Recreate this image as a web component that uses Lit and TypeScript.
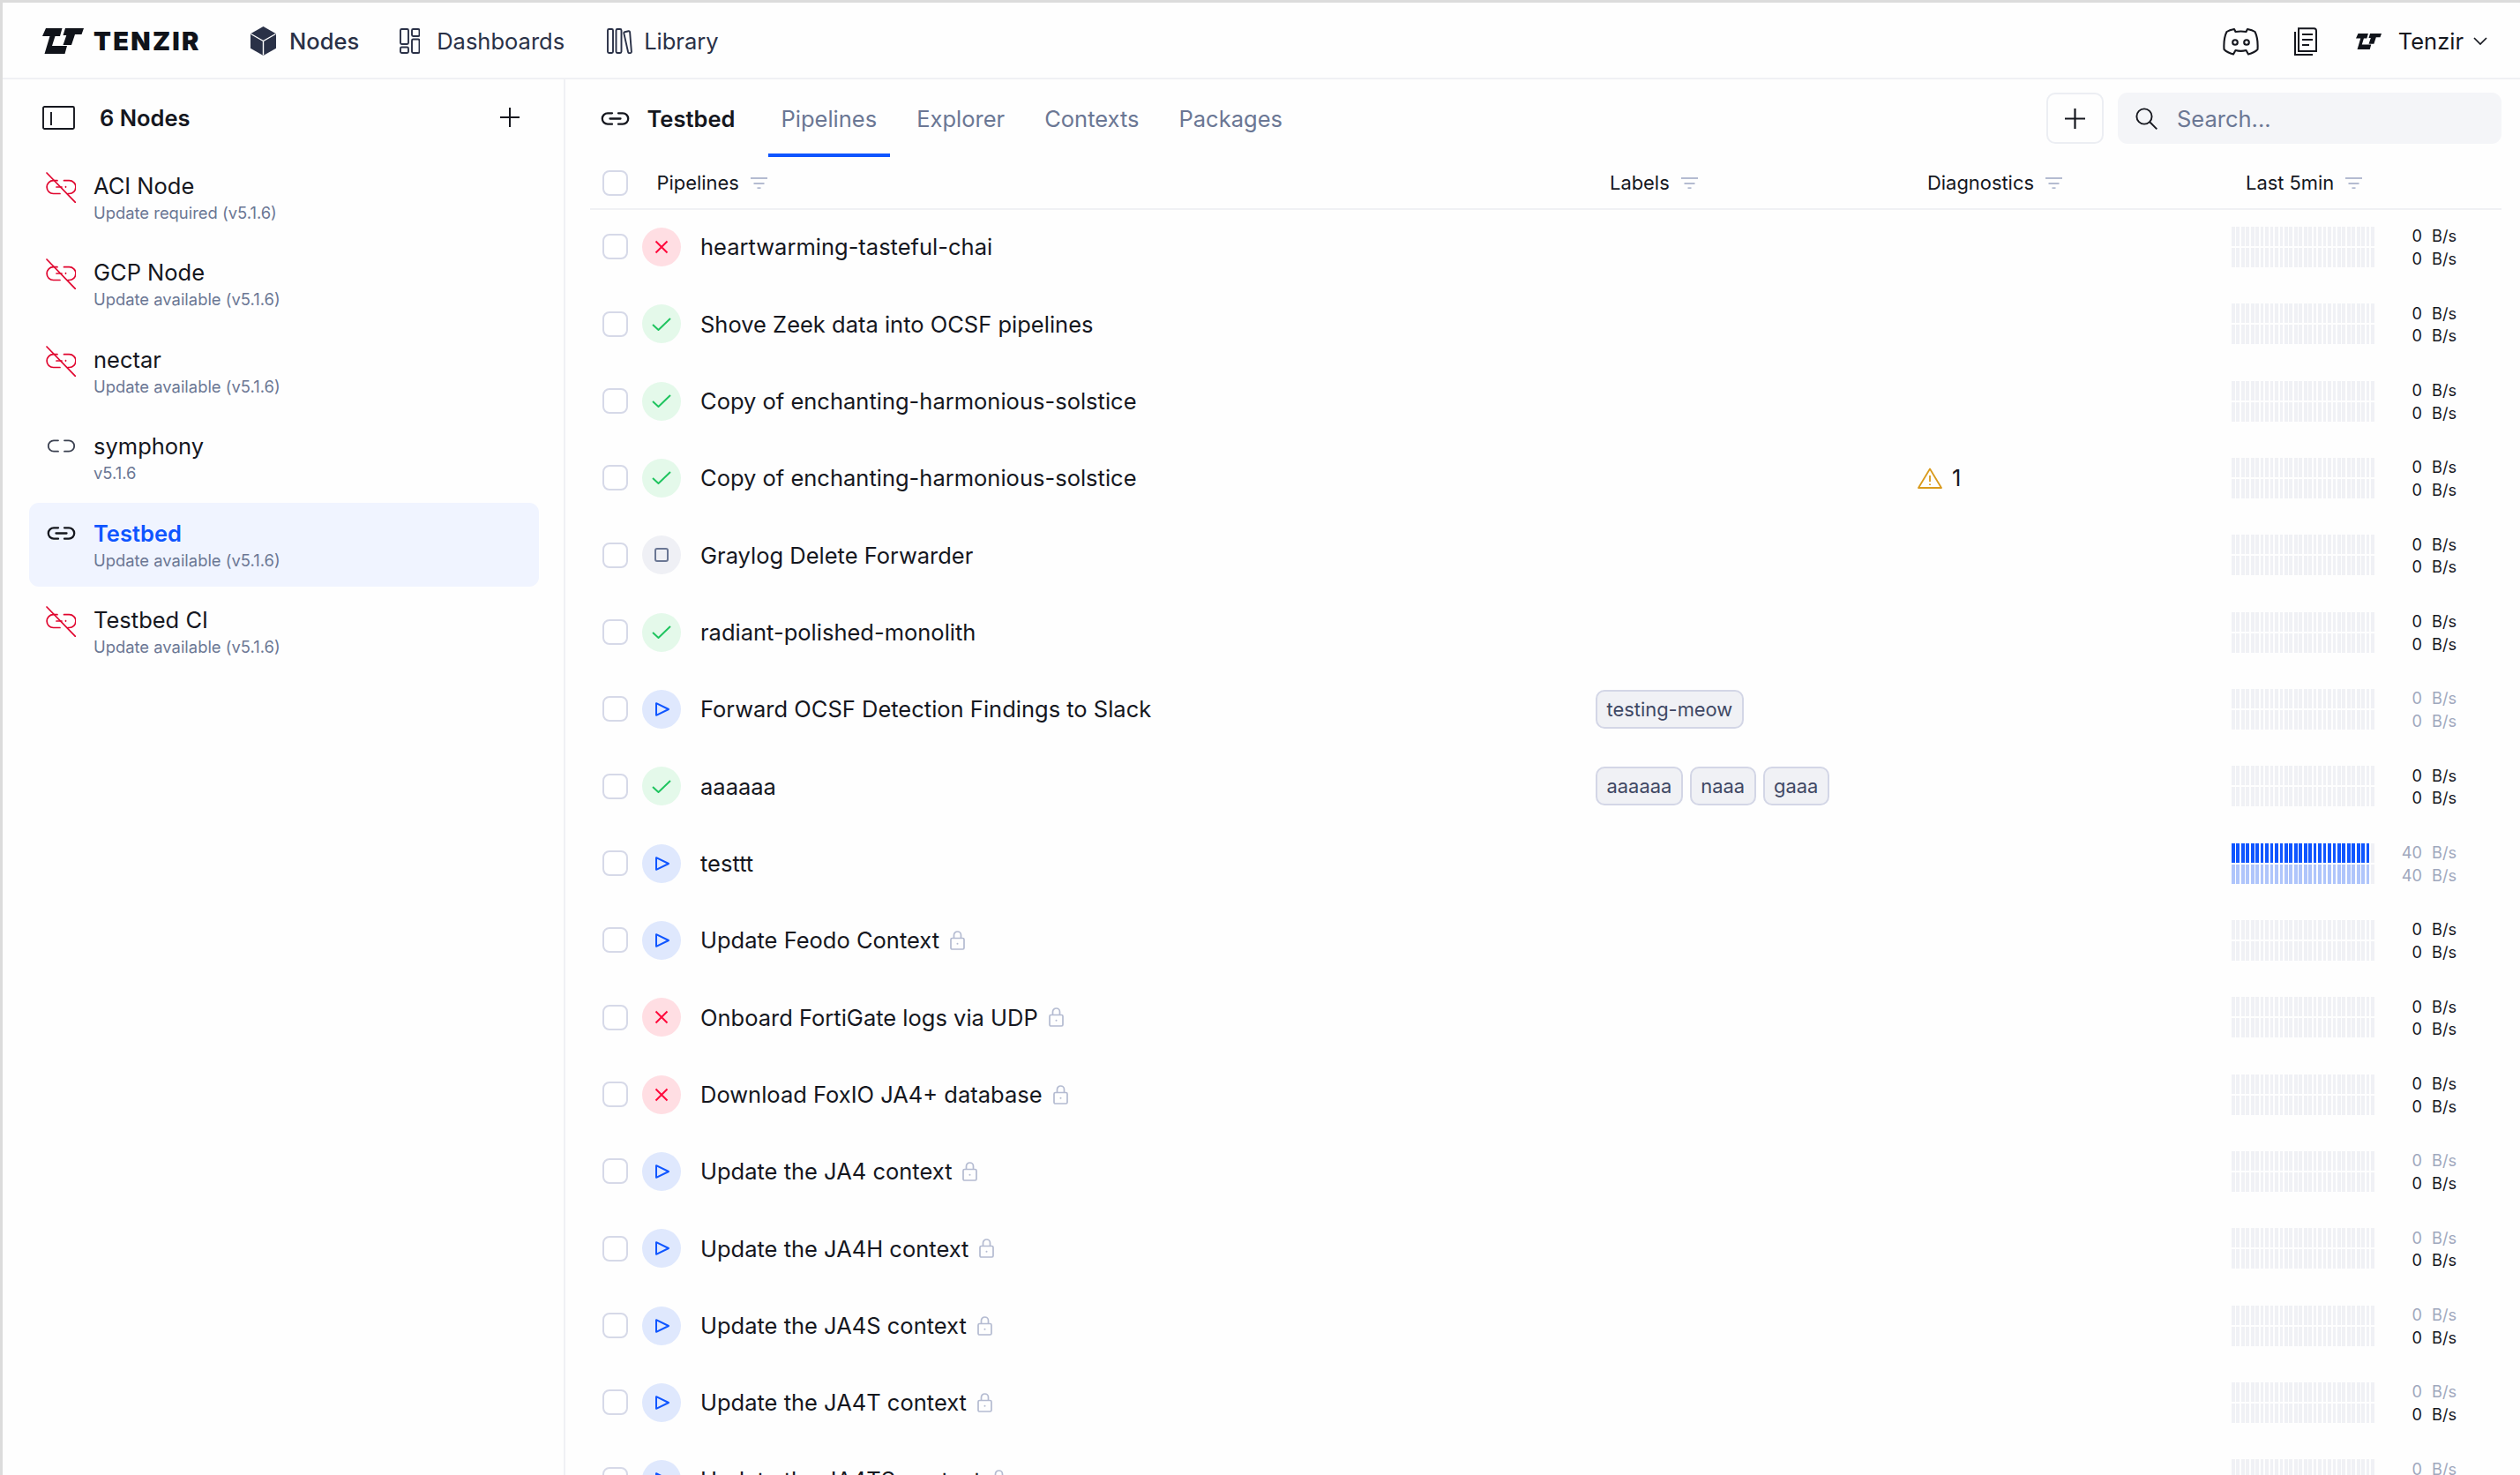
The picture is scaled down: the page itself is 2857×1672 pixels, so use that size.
import { LitElement, html, svg, css, nothing } from "lit";
import { customElement } from "lit/decorators.js";

type Status = "fail" | "ok" | "run" | "stop";
interface Row {
  name: string;
  status: Status;
  labels?: string[];
  warn?: number;
  lock?: boolean;
  rate?: string;
  fade?: [boolean, boolean];
  active?: boolean;
}

const rows: Row[] = [
  { name: "heartwarming-tasteful-chai", status: "fail" },
  { name: "Shove Zeek data into OCSF pipelines", status: "ok" },
  { name: "Copy of enchanting-harmonious-solstice", status: "ok" },
  { name: "Copy of enchanting-harmonious-solstice", status: "ok", warn: 1 },
  { name: "Graylog Delete Forwarder", status: "stop" },
  { name: "radiant-polished-monolith", status: "ok" },
  { name: "Forward OCSF Detection Findings to Slack", status: "run", labels: ["testing-meow"], fade: [true, true] },
  { name: "aaaaaa", status: "ok", labels: ["aaaaaa", "naaa", "gaaa", ""] },
  { name: "testtt", status: "run", rate: "40", fade: [true, true], active: true },
  { name: "Update Feodo Context", status: "run", lock: true },
  { name: "Onboard FortiGate logs via UDP", status: "fail", lock: true },
  { name: "Download FoxIO JA4+ database", status: "fail", lock: true },
  { name: "Update the JA4 context", status: "run", lock: true, fade: [true, false] },
  { name: "Update the JA4H context", status: "run", lock: true, fade: [true, false] },
  { name: "Update the JA4S context", status: "run", lock: true, fade: [true, false] },
  { name: "Update the JA4T context", status: "run", lock: true, fade: [true, false] },
  { name: "Update the JA4TS context", status: "run", lock: true, fade: [true, false] },
];

const nodes = [
  { name: "ACI Node", sub: "Update required (v5.1.6)", state: "down" },
  { name: "GCP Node", sub: "Update available (v5.1.6)", state: "down" },
  { name: "nectar", sub: "Update available (v5.1.6)", state: "down" },
  { name: "symphony", sub: "v5.1.6", state: "idle" },
  { name: "Testbed", sub: "Update available (v5.1.6)", state: "on" },
  { name: "Testbed CI", sub: "Update available (v5.1.6)", state: "down" },
];

const logo = (cls: string) => html`<svg class=${cls} viewBox="0 0 47 29" fill="#10131a">
  <path d="M4 0H22.5L20 9H14.5L11 20H28L25.5 29H2.5L8.5 9H0Z" />
  <path d="M26 0H47L44.5 7H37L33 19H23.5L27.3 8H23.5Z" />
</svg>`;

const linkIcon = (cls: string, mid: boolean) => html`<svg class=${cls} viewBox="0 0 32 15" fill="none" stroke="currentColor" stroke-linecap="round">
  <path d="M12.5 1.3H7.5a6.2 6.2 0 0 0 0 12.4H12.5M19.5 1.3H24.5a6.2 6.2 0 0 1 0 12.4H19.5" />
  ${mid ? svg`<path d="M10 7.5H22" />` : nothing}
</svg>`;

const brokenIcon = html`<svg class="nico broken" viewBox="0 0 34 35" fill="none" stroke="#e0062f" stroke-width="1.7" stroke-linecap="round">
  <path d="M1 1L33.5 34.5" />
  <path d="M13 9.7H8.5a7.4 7.4 0 0 0 0 14.8H16M20.5 9.7H26.5a7.4 7.4 0 0 1 0 14.8H25" />
  <path d="M12 17H18M22.5 16.5v.6" />
</svg>`;

const filterIcon = html`<svg class="filter" viewBox="0 0 19 13" fill="none" stroke="#b4bbd1" stroke-width="1.9">
  <path d="M0 1H19M3.5 7H15.5M7.5 12.2H11.5" />
</svg>`;

const lockIcon = html`<svg class="lock" viewBox="0 0 17 22" fill="none" stroke="#b4bbd1" stroke-width="1.7">
  <rect x="1" y="8.5" width="15" height="12.5" rx="1.6" />
  <path d="M4.5 8.5V5a4 4 0 0 1 8 0v3.5" />
  <circle cx="8.5" cy="14.7" r="1" fill="#b4bbd1" stroke="none" />
</svg>`;

const statusIcon = (s: Status) => {
  if (s === "fail")
    return html`<svg class="si" viewBox="0 0 16 16" fill="none" stroke="#ff0a3c" stroke-width="2"><path d="M1.5 1.5L14.5 14.5M14.5 1.5L1.5 14.5" /></svg>`;
  if (s === "ok")
    return html`<svg class="si check" viewBox="0 0 22 15" fill="none" stroke="#1fc45f" stroke-width="2"><path d="M1 8L7.5 14L21 1" /></svg>`;
  if (s === "run")
    return html`<svg class="si play" viewBox="0 0 16 16" fill="none" stroke="#0f55ff" stroke-width="2" stroke-linejoin="round"><path d="M1 1.2V14.8L15 8Z" /></svg>`;
  return html`<svg class="si" viewBox="0 0 16 16" fill="none" stroke="#6b7794" stroke-width="2"><rect x="1" y="1" width="14" height="14" rx="2" /></svg>`;
};

@customElement("app-root")
export class AppRoot extends LitElement {
  static styles = css`
    :host {
      display: block;
      width: 2857px;
      height: 1672px;
      overflow: hidden;
      box-sizing: border-box;
      border-top: 3px solid #dcdcdc;
      border-left: 3px solid #dcdcdc;
      background: #fefefe;
      font-family: Inter, "Noto Sans", sans-serif;
      color: #15171e;
      font-size: 25.5px;
    }
    svg { display: block; flex-shrink: 0; }
    .top {
      height: 87px;
      box-sizing: border-box;
      border-bottom: 2px solid #f0f1f4;
      display: flex;
      align-items: center;
      padding: 2px 37px 0 45px;
    }
    .top .logo { width: 47px; height: 29px; }
    .brand {
      font-weight: 900;
      font-size: 29px;
      letter-spacing: 2.3px;
      margin-left: 11px;
      color: #10131a;
      width: 120px;
      white-space: nowrap;
    }
    .nav { display: flex; align-items: center; color: #2a3147; margin-left: 58px; }
    .nav a { display: flex; align-items: center; }
    .nav .cube { width: 29px; height: 33px; margin-right: 15px; }
    .nav .dash { width: 23px; height: 29px; margin-right: 19px; margin-left: 46px; }
    .nav .lib { width: 29px; height: 29px; margin-right: 13px; margin-left: 48px; }
    .nav .strong { font-weight: 500; }
    .right { margin-left: auto; display: flex; align-items: center; }
    .right .disc { width: 41px; height: 32px; }
    .right .docs { width: 27px; height: 32px; margin-left: 39px; }
    .right .logo2 { width: 29px; height: 18px; margin-left: 44px; margin-right: 19px; }
    .right .chev { width: 16px; height: 9px; margin-left: 11px; }

    .body { display: flex; height: 1582px; }
    .side {
      width: 638px;
      box-sizing: border-box;
      border-right: 2px solid #f0f1f4;
      padding: 0 28px 0 30px;
      flex-shrink: 0;
    }
    .sidehead {
      height: 86px;
      display: flex;
      align-items: center;
      padding: 0 22px 0 15px;
    }
    .panel { width: 37px; height: 27px; margin-right: 28px; }
    .sidehead b { font-weight: 600; }
    .sidehead .plus { margin-left: auto; width: 22px; height: 22px; }
    .item {
      height: 95px;
      margin-bottom: 3.4px;
      border-radius: 11px;
      display: flex;
      align-items: flex-start;
      box-sizing: border-box;
      padding: 19px 0 0 19px;
    }
    .item.on { background: #f0f4ff; }
    .item.on .nm { color: #0f55ff; font-weight: 600; }
    .icn { width: 54px; height: 35px; flex-shrink: 0; display: flex; align-items: flex-start; color: #15171e; }
    .nico { width: 34px; height: 35px; }
    .link-on { width: 33px; height: 15px; stroke-width: 2.3; margin: 8px 0 0 1px; }
    .link-idle { width: 33px; height: 15px; stroke-width: 1.8; margin: 8px 0 0 1px; color: #3a4050; }
    .nm { line-height: 31px; }
    .sub { font-size: 18.4px; color: #6b7794; line-height: 30px; }

    .main { flex: 1; padding: 0 21px 0 28px; min-width: 0; }
    .tabs { height: 88px; display: flex; align-items: center; }
    .tabs .tb { width: 33px; height: 15px; margin-left: 12px; stroke-width: 2.3; }
    .tabs b { font-weight: 600; margin-left: 19.5px; margin-right: 37px; width: 100px; white-space: nowrap; }
    .tab {
      height: 88px;
      box-sizing: border-box;
      padding: 4px 15px 0;
      border-bottom: 4px solid transparent;
      display: flex;
      align-items: center;
      color: #6b7794;
      margin-right: 15px;
    }
    .tab.act { border-bottom-color: #0f55ff; }
    .addbtn {
      margin-left: auto;
      width: 65px;
      height: 58px;
      box-sizing: border-box;
      border: 2px solid #eceef3;
      border-radius: 10px;
      display: flex;
      align-items: center;
      justify-content: center;
    }
    .addbtn svg { width: 23px; height: 23px; }
    .search {
      width: 435px;
      height: 58px;
      margin-left: 16px;
      background: #f4f5f8;
      border-radius: 11px;
      display: flex;
      align-items: center;
      padding-left: 20px;
      box-sizing: border-box;
      color: #6b7794;
    }
    .search svg { width: 25px; height: 25px; margin-right: 22px; }

    .grid { display: grid; grid-template-columns: 1140px 360px 361px 306px; }
    .hrow { height: 60px; border-bottom: 2px solid #f0f1f4; box-sizing: border-box; align-items: center; font-size: 21.9px; }
    .hc { display: flex; align-items: center; padding-left: 16px; }
    .hc:first-child { padding-left: 14px; }
    .filter { width: 19px; height: 13px; margin-left: 13px; }
    .cb { width: 29px; height: 29px; box-sizing: border-box; border: 2px solid #d6d9e8; border-radius: 8px; flex-shrink: 0; background: #fff; }
    .hc .ht { margin-left: 32.5px; }
    .rows { margin-top: -1.7px; }
    .row { height: 87.33px; align-items: center; }
    .c1 { display: flex; align-items: center; padding-left: 14px; min-width: 0; }
    .st { width: 44px; height: 44px; border-radius: 50%; margin: 0 22px 0 16px; display: flex; align-items: center; justify-content: center; flex-shrink: 0; }
    .st.fail { background: #ffdee3; }
    .st.ok { background: #e4f9ea; }
    .st.run { background: #dfe8fd; }
    .st.stop { background: #eff0f5; }
    .si { width: 16px; height: 16px; }
    .si.check { width: 22px; height: 15px; }
    .si.play { margin-left: 2px; }
    .lock { width: 17px; height: 22px; margin-left: 12px; }
    .chips { display: flex; gap: 8px; width: 270px; overflow: hidden; }
    .chip {
      height: 44px;
      min-width: 20px;
      box-sizing: border-box;
      border: 2px solid #d3d6e6;
      background: #f0f1f5;
      border-radius: 10px;
      padding: 0 10.5px;
      font-size: 21.9px;
      color: #3f4864;
      display: flex;
      align-items: center;
      flex-shrink: 0;
    }
    .warn { display: flex; align-items: center; padding-left: 5px; }
    .warn svg { width: 28px; height: 24px; margin-right: 11px; }
    .c4 { display: flex; align-items: center; }
    .spark { width: 162px; display: flex; flex-direction: column; gap: 2px; flex-shrink: 0; }
    .sline { display: flex; gap: 1.7px; height: 22px; }
    .sline i { flex: 1; background: #f0f1f5; }
    .sline.a i.f { background: #0f55ff; }
    .sline.b i.f { background: #afc5fb; }
    .rates { display: grid; grid-template-columns: 54px auto; column-gap: 11px; font-size: 18.2px; line-height: 25.6px; text-align: right; color: #15171e; padding-top: 2px; }
    .rates span:nth-child(even) { text-align: left; }
    .rates .fd { color: #a0a8bd; }
  `;

  private spark(active?: boolean) {
    const bars = Array.from({ length: 30 }, (_, i) => i);
    const line = (c: string) => html`<div class="sline ${c}">${bars.map((i) => html`<i class=${active && i < 29 ? "f" : ""}></i>`)}</div>`;
    return html`<div class="spark">${line("a")}${line("b")}</div>`;
  }

  render() {
    return html`
      <div class="top">
        ${logo("logo")}
        <div class="brand">TENZIR</div>
        <nav class="nav">
          <a class="strong">
            <svg class="cube" viewBox="0 0 29 33"><path fill="#2a3147" d="M14.5 0L29 8.2V24.8L14.5 33L0 24.8V8.2Z" /><path fill="none" stroke="#fff" stroke-width="1.4" d="M0.5 8.5L14.5 16.5L28.5 8.5M14.5 16.5V32.5" /></svg>
            Nodes
          </a>
          <a>
            <svg class="dash" viewBox="0 0 23 29" fill="none" stroke="#2a3147" stroke-width="1.9"><rect x="1" y="1" width="9" height="17" rx="1.4" /><rect x="14" y="1" width="8.5" height="8" rx="1.4" /><rect x="1" y="21.5" width="9" height="6.5" rx="1.4" /><rect x="14" y="12.5" width="8.5" height="15.5" rx="1.4" /></svg>
            Dashboards
          </a>
          <a>
            <svg class="lib" viewBox="0 0 29 29" fill="none" stroke="#2a3147" stroke-width="1.9"><rect x="1" y="1" width="6" height="27" rx="1.4" /><rect x="10.5" y="1" width="6" height="27" rx="1.4" /><path d="M20.3 4.2L24.6 3.2Q25.8 3 26.1 4.2L27.9 26.6Q28 27.8 26.8 28L25.6 28.1Q24.4 28.2 24.1 27L19.3 5.6Q19.1 4.5 20.3 4.2Z" /></svg>
            Library
          </a>
        </nav>
        <div class="right">
          <svg class="disc" viewBox="0 0 41 32" fill="none" stroke="#15171e" stroke-width="2.1" stroke-linejoin="round">
            <path d="M13 2C9 2.7 6 4 4.5 5C2 10 1 17 1.5 25C4 27.5 8 29.5 12 30.5L14.5 26C18 27 23 27 26.5 26L29 30.5C33 29.5 37 27.5 39.5 25C40 17 39 10 36.5 5C35 4 32 2.7 28 2L26.5 5C23 4.4 18 4.4 14.5 5Z" />
            <circle cx="14" cy="17" r="2.8" /><circle cx="27" cy="17" r="2.8" />
          </svg>
          <svg class="docs" viewBox="0 0 27 32" fill="none" stroke="#15171e" stroke-width="2">
            <path d="M2 5V31H22" />
            <path d="M6 1.2H23.5Q26 1.2 26 4V27H6Z" />
            <path d="M10 8H22M10 14H22M10 20H18" />
          </svg>
          ${logo("logo2")}
          Tenzir
          <svg class="chev" viewBox="0 0 16 9" fill="none" stroke="#15171e" stroke-width="1.7"><path d="M1 1L8 8L15 1" /></svg>
        </div>
      </div>
      <div class="body">
        <aside class="side">
          <div class="sidehead">
            <svg class="panel" viewBox="0 0 37 27" fill="none" stroke="#15171e" stroke-width="1.9"><rect x="1" y="1" width="35" height="25" rx="1.5" /><path d="M10 7V22" /></svg>
            <b>6 Nodes</b>
            <svg class="plus" viewBox="0 0 22 22" fill="none" stroke="#15171e" stroke-width="2"><path d="M11 0V22M0 11H22" /></svg>
          </div>
          ${nodes.map(
            (n) => html`<div class="item ${n.state === "on" ? "on" : ""}">
              <div class="icn">
                ${n.state === "down" ? brokenIcon : n.state === "on" ? linkIcon("link-on", true) : linkIcon("link-idle", false)}
              </div>
              <div>
                <div class="nm">${n.name}</div>
                <div class="sub">${n.sub}</div>
              </div>
            </div>`
          )}
        </aside>
        <section class="main">
          <div class="tabs">
            ${linkIcon("tb", true)}
            <b>Testbed</b>
            <div class="tab act">Pipelines</div>
            <div class="tab">Explorer</div>
            <div class="tab">Contexts</div>
            <div class="tab">Packages</div>
            <div class="addbtn"><svg viewBox="0 0 23 23" fill="none" stroke="#15171e" stroke-width="2.2"><path d="M11.5 0V23M0 11.5H23" /></svg></div>
            <div class="search">
              <svg viewBox="0 0 25 25" fill="none" stroke="#15171e" stroke-width="1.9"><circle cx="10" cy="10" r="8.6" /><path d="M16 16L24.3 24.3" /></svg>
              Search...
            </div>
          </div>
          <div class="grid hrow">
            <div class="hc"><div class="cb"></div><span class="ht">Pipelines</span>${filterIcon}</div>
            <div class="hc">Labels${filterIcon}</div>
            <div class="hc">Diagnostics${filterIcon}</div>
            <div class="hc">Last 5min${filterIcon}</div>
          </div>
          <div class="rows">
          ${rows.map((r) => {
            const val = r.rate ?? "0";
            const f = r.fade ?? [false, false];
            return html`<div class="grid row">
              <div class="c1">
                <div class="cb"></div>
                <div class="st ${r.status}">${statusIcon(r.status)}</div>
                <span>${r.name}</span>
                ${r.lock ? lockIcon : nothing}
              </div>
              <div>
                ${r.labels ? html`<div class="chips">${r.labels.map((l) => html`<div class="chip">${l}</div>`)}</div>` : nothing}
              </div>
              <div>
                ${r.warn
                  ? html`<div class="warn">
                      <svg viewBox="0 0 28 24" fill="none" stroke="#d99a1c" stroke-width="1.8" stroke-linejoin="round"><path d="M14 1.5L27 23H1Z" /><path d="M14 9V16M14 18.5V20" /></svg>
                      ${r.warn}
                    </div>`
                  : nothing}
              </div>
              <div class="c4">
                ${this.spark(r.active)}
                <div class="rates">
                  <span class=${f[0] ? "fd" : ""}>${val}</span><span class=${f[0] ? "fd" : ""}>B/s</span>
                  <span class=${f[1] ? "fd" : ""}>${val}</span><span class=${f[1] ? "fd" : ""}>B/s</span>
                </div>
              </div>
            </div>`;
          })}
          </div>
        </section>
      </div>
    `;
  }
}
